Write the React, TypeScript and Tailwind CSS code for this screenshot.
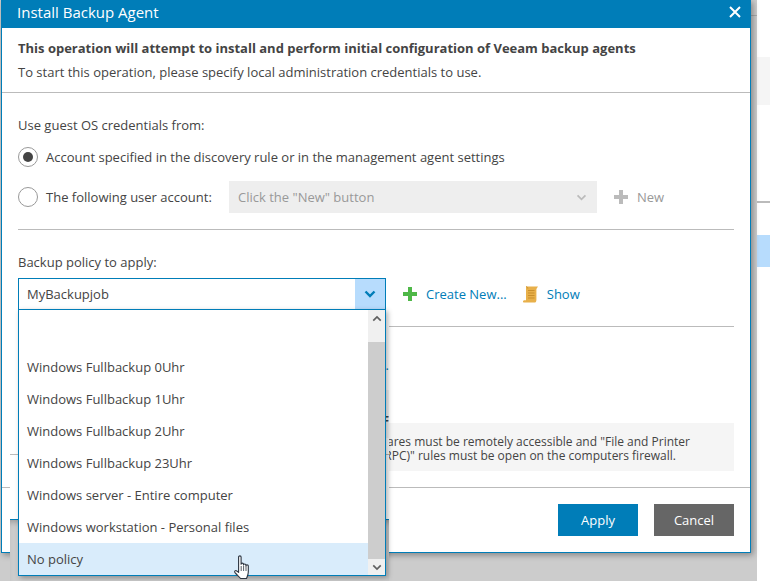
import React from "react";

const font = "font-['Open_Sans',sans-serif]";

function Chevron({ className, down = true, w = 2 }: { className?: string; down?: boolean; w?: number }) {
  return (
    <svg viewBox="0 0 12 8" className={className} fill="none" stroke="currentColor" strokeWidth={w}>
      <path d={down ? "M1.5 1.5 6 6l4.5-4.5" : "M1.5 6.5 6 2l4.5 4.5"} />
    </svg>
  );
}

function Plus({ className }: { className?: string }) {
  return (
    <svg viewBox="0 0 14 14" className={className} fill="currentColor">
      <path d="M5 0h4v5h5v4H9v5H5V9H0V5h5z" />
    </svg>
  );
}

function Radio({ checked }: { checked?: boolean }) {
  return (
    <span className="flex h-5 w-5 shrink-0 items-center justify-center rounded-full border border-[#999] bg-white">
      {checked && <span className="h-[10px] w-[10px] rounded-full bg-[#444]" />}
    </span>
  );
}

function ScrollIcon() {
  return (
    <svg viewBox="0 0 15 17" className="h-[17px] w-[15px]" fill="none">
      <path d="M3 .5h12l-1.6 2.6V14c0 1.6-.8 2.6-2 2.6H1c-.6 0-1-.4-1-1 0-.8.6-1.4 1.4-1.4H3z" fill="#e8b04a" />
      <path d="M3 .6c1.2 0 1.8.8 1.8 2" stroke="#c98f2c" strokeWidth="0.8" />
      <path d="M5 4.5h6.5M5 7h6.5M5 9.5h6.5M5 12h6.5" stroke="#c98f2c" strokeWidth="1" />
    </svg>
  );
}

function Hand() {
  return (
    <svg viewBox="0 0 19 25" className="absolute left-[233px] top-[555px] h-[25px] w-[19px]">
      <path
        d="M5.6 2c0-1.5 2.5-1.5 2.5 0v7.2c0-1.4 2.4-1.4 2.4 0v.8c0-1.4 2.4-1.4 2.4 0v.8c0-1.3 2.4-1.3 2.4 0v6.2c0 2.7-1.2 4.9-1.8 6.5H7.6c-1.2-1.7-3.6-3.4-5.6-5.8-1.1-1.4.5-2.9 1.8-1.7l1.8 1.4z"
        fill="#fff"
        stroke="#2b3440"
        strokeWidth="1.1"
        strokeLinejoin="round"
      />
      <path d="M8.2 11v5M10.6 11v5M13 11v5" stroke="#2b3440" strokeWidth="0.8" />
    </svg>
  );
}

const items = [
  "",
  "Windows Fullbackup 0Uhr",
  "Windows Fullbackup 1Uhr",
  "Windows Fullbackup 2Uhr",
  "Windows Fullbackup 23Uhr",
  "Windows server - Entire computer",
  "Windows workstation - Personal files",
  "No policy",
];

export default function App() {
  return (
    <div className={`relative flex h-[581px] w-[770px] overflow-hidden bg-white text-[13px] text-[#444] ${font}`}>
      {/* dimmed overlay */}
      <div className="relative h-full w-[757px] shrink-0 bg-[#cccccc]">
        <div className="absolute left-[751px] top-[15px] h-px w-[6px] bg-[#aaa]" />

        {/* dialog */}
        <div className="absolute left-[1px] top-0 flex h-[553px] w-[750px] flex-col border-x border-b border-[#007db8] bg-white shadow-[2px_2px_6px_rgba(0,0,0,0.35)]">
          <div className="-mx-px flex h-[28px] shrink-0 items-center justify-between bg-[#007db8] pl-[16px] pr-[10px] text-[15px] text-white">
            <span className="pb-[3px]">Install Backup Agent</span>
            <span className="pb-[5px]">
              <svg viewBox="0 0 12 12" className="block h-3 w-3" stroke="#fff" strokeWidth="2">
                <path d="M1 1l10 10M11 1 1 11" />
              </svg>
            </span>
          </div>

          <div className="flex h-[65px] shrink-0 flex-col border-b border-[#bbb] pl-[16px] pt-[11px]">
            <div className="h-[18px] font-bold leading-[18px]">
              This operation will attempt to install and perform initial configuration of Veeam backup agents
            </div>
            <div className="mt-[6px] h-[18px] leading-[18px]">To start this operation, please specify local administration credentials to use.</div>
          </div>

          <div className="flex flex-1 flex-col px-[16px]">
            <div className="mt-[23px] h-[18px] leading-[18px]">Use guest OS credentials from:</div>
            <div className="mt-[13px] flex h-5 items-center gap-2">
              <Radio checked />
              <span className="pt-[2px]">Account specified in the discovery rule or in the management agent settings</span>
            </div>
            <div className="mt-[14px] flex h-8 items-center">
              <Radio />
              <span className="ml-2 w-[183px] pt-[2px]">The following user account:</span>
              <div className="flex h-8 w-[368px] items-center justify-between bg-[#eeeeee] pl-[9px] pr-[10px] text-[#999]">
                <span className="pt-[2px]">Click the "New" button</span>
                <Chevron className="h-[7px] w-[11px] text-[#bbb]" />
              </div>
              <Plus className="ml-[17px] h-[14px] w-[14px] text-[#bbb]" />
              <span className="ml-[9px] pt-[2px] text-[#999]">New</span>
            </div>
            <div className="mt-4 h-px bg-[#bbb]" />
            <div className="mt-[23px] h-[18px] leading-[18px]">Backup policy to apply:</div>
            <div className="mt-[7px] flex h-8 items-center">
              <div className="w-[368px]" />
              <Plus className="ml-[17px] h-[14px] w-[14px] text-[#4fb848]" />
              <span className="ml-[9px] pt-[2px] text-[#007db8]">Create New...</span>
              <span className="ml-4">
                <ScrollIcon />
              </span>
              <span className="ml-[9px] pt-[2px] text-[#007db8]">Show</span>
            </div>
            <div className="mt-4 h-px bg-[#bbb]" />
            <div className="mt-[96px] flex h-12 flex-col justify-center overflow-hidden bg-[#f5f5f5] pr-[44px] pt-[4px] text-[12px] leading-[14px]">
              <div className="flex justify-end whitespace-nowrap">Admin$ and C$ shares must be remotely accessible and "File and Printer</div>
              <div className="flex justify-end whitespace-nowrap pr-[14px]">Sharing (SMB-In)" and "Remote Service (RPC)" rules must be open on the computers firewall.</div>
            </div>
          </div>

          <div className="flex h-[65px] shrink-0 items-start justify-end gap-4 border-t border-[#bbb] pr-[16px] pt-4">
            <button className="h-8 w-20 bg-[#007db8] pt-[2px] text-white">Apply</button>
            <button className="h-8 w-20 bg-[#666] pt-[2px] text-white">Cancel</button>
          </div>
        </div>

        <div className="absolute left-[10px] top-[309px] flex h-[272px] w-[379px] flex-col">
          <div className="flex h-[210px] flex-col bg-white">
            <div className="mt-[47px] h-[18px] text-right leading-[18px] text-[#007db8]">...</div>
            <div className="ml-2 mt-[16px] flex h-12 flex-col justify-end bg-[#f5f5f5] pb-[10px] text-right text-[12px] font-bold leading-[14px] text-[#444]">
              F
            </div>
            <div className="mt-4 h-px bg-[#bbb]" />
          </div>
          <div className="flex-1 border-t border-[#007db8] bg-[#cccccc] shadow-[inset_0_6px_6px_-4px_rgba(0,0,0,0.25)]" />
        </div>

        {/* open select */}
        <div className="absolute left-[18px] top-[278px] flex h-[32px] w-[368px] items-stretch border border-[#007db8] bg-white">
          <span className="flex flex-1 items-center pl-2 pt-[2px]">MyBackupjob</span>
          <span className="flex w-[30px] items-center justify-center bg-[#b7dcfd]">
            <Chevron className="h-[8px] w-[12px] text-[#007db8]" w={2.4} />
          </span>
        </div>
        <div className="absolute left-[18px] top-[309px] flex h-[267px] w-[368px] border border-[#007db8] bg-white shadow-[2px_2px_5px_rgba(0,0,0,0.3)]">
          <div className="flex flex-1 flex-col overflow-hidden pt-[9px]">
            {items.map((t, i) => (
              <div key={i} className={`flex h-8 shrink-0 items-center pl-2 pt-[2px] ${t === "No policy" ? "bg-[#d9ecfb]" : ""}`}>
                {t}
              </div>
            ))}
          </div>
          <div className="flex w-[17px] flex-col bg-[#cdcdcd]">
            <div className="flex h-[32px] items-start justify-center bg-[#f0f0f0] pt-[5px]">
              <Chevron down={false} className="h-[7px] w-[10px] text-[#606060]" />
            </div>
            <div className="flex-1" />
            <div className="flex h-[16px] items-center justify-center bg-[#f0f0f0]">
              <Chevron className="h-[7px] w-[10px] text-[#606060]" />
            </div>
          </div>
        </div>
        <Hand />
      </div>

      {/* page behind the overlay */}
      <div className="flex-1">
        <div className="mt-[57px] h-[48px] bg-[#f5f5f5]" />
        <div className="mt-[96px] h-[2px] bg-[#bbb]" />
        <div className="mt-[32px] h-[32px] bg-[#b7dcfd]" />
      </div>
    </div>
  );
}
